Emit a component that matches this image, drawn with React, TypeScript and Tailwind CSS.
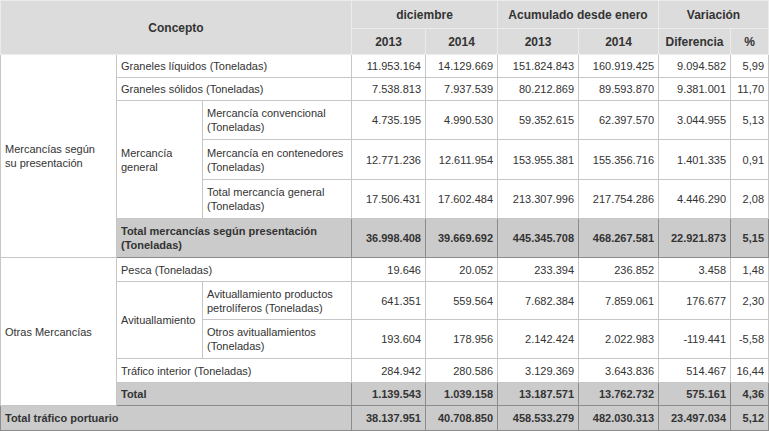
import React from "react";

const font = { fontFamily: '"Liberation Sans", Arial, Helvetica, sans-serif' };

const W = "border border-[#c6c6c6] bg-white text-[11px] leading-[14px] text-[#333] px-[4px] align-middle";
const WN = W + " text-right";
const G = "border border-[#8c8c8c] bg-[#cbcbcb] text-[11px] leading-[14px] font-bold text-[#333] px-[4px] align-middle";
const GN = G + " text-right";
const H = "border border-[#ececec] bg-[#dcdcdc] text-[12px] font-bold text-[#333] text-center align-middle";

type Nums = string[];

function NumCells({ v, gray }: { v: Nums; gray?: boolean }) {
  return (
    <>
      {v.map((x, i) => (
        <td key={i} className={gray ? GN : WN}>
          {x}
        </td>
      ))}
    </>
  );
}

export default function App() {
  return (
    <div className="bg-white w-[769px] h-[431px] overflow-hidden" style={font}>
      <table className="border-collapse table-fixed w-[768px]">
        <colgroup>
          <col className="w-[116px]" />
          <col className="w-[86px]" />
          <col className="w-[149px]" />
          <col className="w-[74px]" />
          <col className="w-[72px]" />
          <col className="w-[81px]" />
          <col className="w-[80px]" />
          <col className="w-[72px]" />
          <col className="w-[38px]" />
        </colgroup>
        <tbody>
          <tr className="h-[28px]">
            <td className={H} colSpan={3} rowSpan={2}>Concepto</td>
            <td className={H} colSpan={2}>diciembre</td>
            <td className={H} colSpan={2}>Acumulado desde enero</td>
            <td className={H} colSpan={2}>Variación</td>
          </tr>
          <tr className="h-[26px]">
            <td className={H}>2013</td>
            <td className={H}>2014</td>
            <td className={H}>2013</td>
            <td className={H}>2014</td>
            <td className={H}>Diferencia</td>
            <td className={H}>%</td>
          </tr>
          <tr className="h-[23px]">
            <td className={W} rowSpan={6}>Mercancías según<br />su presentación</td>
            <td className={W} colSpan={2}>Graneles líquidos (Toneladas)</td>
            <NumCells v={["11.953.164", "14.129.669", "151.824.843", "160.919.425", "9.094.582", "5,99"]} />
          </tr>
          <tr className="h-[23px]">
            <td className={W} colSpan={2}>Graneles sólidos (Toneladas)</td>
            <NumCells v={["7.538.813", "7.937.539", "80.212.869", "89.593.870", "9.381.001", "11,70"]} />
          </tr>
          <tr className="h-[39px]">
            <td className={W} rowSpan={3}>Mercancía<br />general</td>
            <td className={W}>Mercancía convencional<br />(Toneladas)</td>
            <NumCells v={["4.735.195", "4.990.530", "59.352.615", "62.397.570", "3.044.955", "5,13"]} />
          </tr>
          <tr className="h-[40px]">
            <td className={W}>Mercancía en contenedores<br />(Toneladas)</td>
            <NumCells v={["12.771.236", "12.611.954", "153.955.381", "155.356.716", "1.401.335", "0,91"]} />
          </tr>
          <tr className="h-[39px]">
            <td className={W}>Total mercancía general<br />(Toneladas)</td>
            <NumCells v={["17.506.431", "17.602.484", "213.307.996", "217.754.286", "4.446.290", "2,08"]} />
          </tr>
          <tr className="h-[39px]">
            <td className={G} colSpan={2}>Total mercancías según presentación<br />(Toneladas)</td>
            <NumCells gray v={["36.998.408", "39.669.692", "445.345.708", "468.267.581", "22.921.873", "5,15"]} />
          </tr>
          <tr className="h-[24px]">
            <td className={W} rowSpan={5}>Otras Mercancías</td>
            <td className={W} colSpan={2}>Pesca (Toneladas)</td>
            <NumCells v={["19.646", "20.052", "233.394", "236.852", "3.458", "1,48"]} />
          </tr>
          <tr className="h-[38px]">
            <td className={W} rowSpan={2}>Avituallamiento</td>
            <td className={W}>Avituallamiento productos<br />petrolíferos (Toneladas)</td>
            <NumCells v={["641.351", "559.564", "7.682.384", "7.859.061", "176.677", "2,30"]} />
          </tr>
          <tr className="h-[39px]">
            <td className={W}>Otros avituallamientos<br />(Toneladas)</td>
            <NumCells v={["193.604", "178.956", "2.142.424", "2.022.983", "-119.441", "-5,58"]} />
          </tr>
          <tr className="h-[24px]">
            <td className={W} colSpan={2}>Tráfico interior (Toneladas)</td>
            <NumCells v={["284.942", "280.586", "3.129.369", "3.643.836", "514.467", "16,44"]} />
          </tr>
          <tr className="h-[23px]">
            <td className={G} colSpan={2}>Total</td>
            <NumCells gray v={["1.139.543", "1.039.158", "13.187.571", "13.762.732", "575.161", "4,36"]} />
          </tr>
          <tr className="h-[25px]">
            <td className={G} colSpan={3}>Total tráfico portuario</td>
            <NumCells gray v={["38.137.951", "40.708.850", "458.533.279", "482.030.313", "23.497.034", "5,12"]} />
          </tr>
        </tbody>
      </table>
    </div>
  );
}
